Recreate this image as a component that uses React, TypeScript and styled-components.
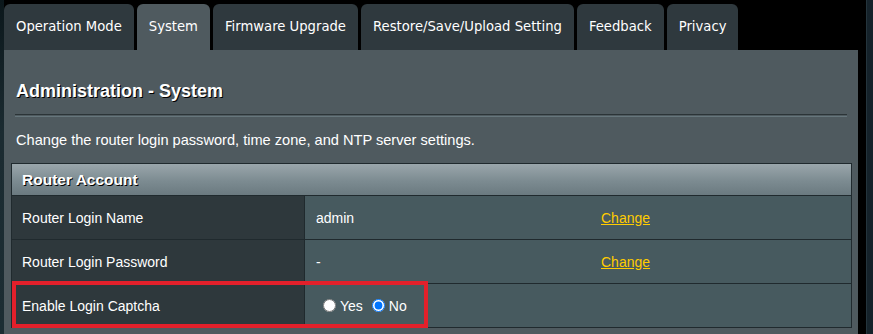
import styled, { createGlobalStyle } from "styled-components";

const GlobalStyle = createGlobalStyle`
  html, body {
    margin: 0;
    padding: 0;
    background: #000;
    overflow: hidden;
  }
`;

const Page = styled.div`
  display: flex;
  height: 334px;
  width: 873px;
`;

const LeftEdge = styled.div`
  width: 4px;
  background: linear-gradient(180deg, #0b171b 0%, #1b2b31 40%, #1c2d33 100%);
`;

const RightEdge = styled.div`
  width: 6px;
  margin-left: 8px;
  background: #15222a;
  border-left: 1px solid #24343c;
`;

const Main = styled.div`
  width: 855px;
  display: flex;
  flex-direction: column;
`;

const TabBar = styled.div`
  display: flex;
  gap: 3px;
  padding-top: 4px;
`;

const Tab = styled.div<{ $active?: boolean }>`
  height: 46px;
  box-sizing: border-box;
  padding: 0 12px 2px;
  display: flex;
  align-items: center;
  border-radius: 6px 6px 0 0;
  background: ${(p) => (p.$active ? "#4f5a5f" : "#2f393e")};
  color: #fff;
  font-family: "DejaVu Sans", Verdana, sans-serif;
  font-size: 13.2px;
  white-space: nowrap;
`;

const Panel = styled.div`
  flex: 1;
  background: #4f5a5f;
  padding: 31px 6px 0 7px;
  font-family: "Liberation Sans", Arial, sans-serif;
  color: #fff;
`;

const Title = styled.h2`
  margin: 0 0 13px 5px;
  font-size: 18px;
  line-height: 20px;
  font-weight: bold;
  text-shadow: 1px 1px 0 #000;
`;

const Divider = styled.div`
  height: 1px;
  margin: 0 5px 0 4px;
  border-top: 1px solid #2b3437;
  border-bottom: 1px solid #66767c;
`;

const Desc = styled.p`
  margin: 15px 0 15px 5px;
  font-size: 14.6px;
  line-height: 16px;
`;

const Table = styled.div`
  border: 1px solid #202a2e;
`;

const HeaderRow = styled.div`
  height: 31px;
  display: flex;
  align-items: center;
  padding-left: 10px;
  background: linear-gradient(180deg, #9aa6ab 0%, #7c8b91 55%, #6b7a80 100%);
  border-bottom: 1px solid #202a2e;
  font-size: 15.5px;
  font-weight: bold;
  text-shadow: 1px 1px 0 #000;
`;

const Row = styled.div<{ $last?: boolean }>`
  position: relative;
  display: grid;
  grid-template-columns: 293px 1fr;
  height: 43px;
  border-bottom: ${(p) => (p.$last ? "none" : "1px solid #202a2e")};
`;

const LabelCell = styled.div`
  display: flex;
  align-items: center;
  padding-left: 10px;
  background: #2e383c;
  border-right: 1px solid #202a2e;
  font-size: 14px;
`;

const ValueCell = styled.div`
  display: flex;
  align-items: center;
  padding-left: 11px;
  background: #475a5f;
  font-size: 14px;
`;

const ValueText = styled.span`
  width: 285px;
`;

const ChangeLink = styled.a`
  color: #ffcc00;
  text-decoration: underline;
  cursor: pointer;
`;

const Radio = styled.input<{ $gap?: number }>`
  width: 13px;
  height: 13px;
  margin: 0 4px 0 ${(p) => p.$gap ?? 6}px;
`;

const RadioText = styled.label`
  margin-right: 1px;
`;

const Highlight = styled.div`
  position: absolute;
  left: 0;
  top: -3px;
  width: 416px;
  height: 47px;
  box-sizing: border-box;
  border: 4px solid #e3202b;
  pointer-events: none;
  z-index: 2;
`;

const tabs = [
  "Operation Mode",
  "System",
  "Firmware Upgrade",
  "Restore/Save/Upload Setting",
  "Feedback",
  "Privacy",
];

export default function App() {
  return (
    <>
      <GlobalStyle />
      <Page>
        <LeftEdge />
        <Main>
          <TabBar>
            {tabs.map((t) => (
              <Tab key={t} $active={t === "System"}>
                {t}
              </Tab>
            ))}
          </TabBar>
          <Panel>
            <Title>Administration - System</Title>
            <Divider />
            <Desc>
              Change the router login password, time zone, and NTP server
              settings.
            </Desc>
            <Table>
              <HeaderRow>Router Account</HeaderRow>
              <Row>
                <LabelCell>Router Login Name</LabelCell>
                <ValueCell>
                  <ValueText>admin</ValueText>
                  <ChangeLink>Change</ChangeLink>
                </ValueCell>
              </Row>
              <Row>
                <LabelCell>Router Login Password</LabelCell>
                <ValueCell>
                  <ValueText>-</ValueText>
                  <ChangeLink>Change</ChangeLink>
                </ValueCell>
              </Row>
              <Row $last>
                <LabelCell>Enable Login Captcha</LabelCell>
                <ValueCell>
                  <Radio type="radio" name="captcha" id="cap-yes" $gap={7} />
                  <RadioText htmlFor="cap-yes">Yes</RadioText>
                  <Radio type="radio" name="captcha" id="cap-no" $gap={8} defaultChecked />
                  <RadioText htmlFor="cap-no">No</RadioText>
                </ValueCell>
                <Highlight />
              </Row>
            </Table>
          </Panel>
        </Main>
        <RightEdge />
      </Page>
    </>
  );
}
